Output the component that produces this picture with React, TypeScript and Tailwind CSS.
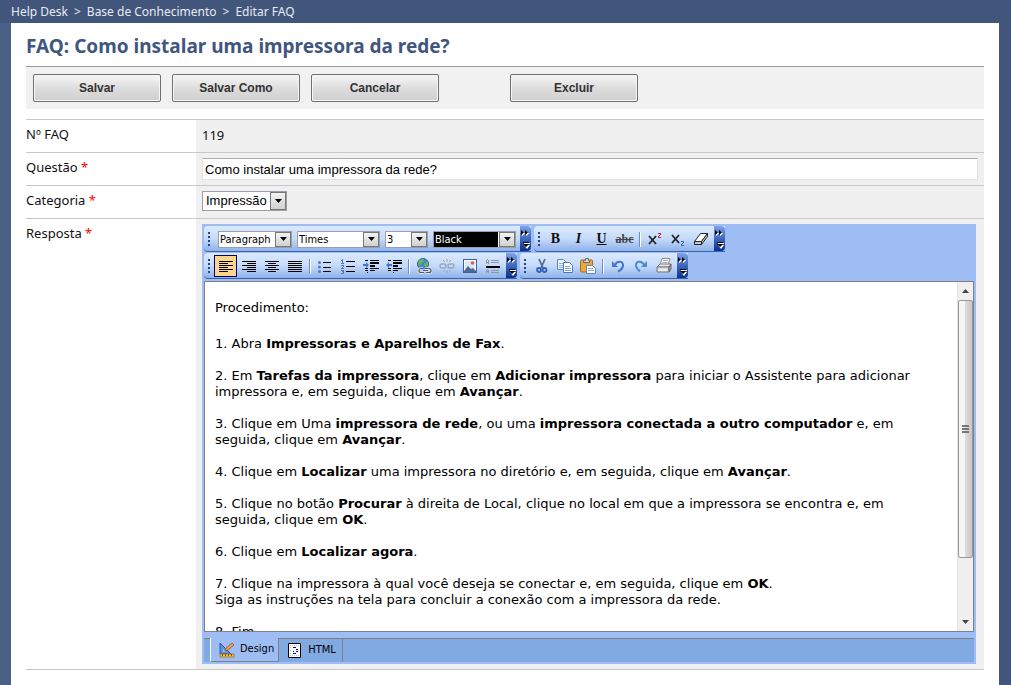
import type { ReactNode } from "react";

const steps: { key: string; body: ReactNode }[] = [
  { key: "abra", body: <>1. Abra <b>Impressoras e Aparelhos de Fax</b>.</> },
  {
    key: "tarefas",
    body: (
      <>
        2. Em <b>Tarefas da impressora</b>, clique em <b>Adicionar impressora</b> para iniciar o
        Assistente para adicionar impressora e, em seguida, clique em <b>Avançar</b>.
      </>
    ),
  },
  {
    key: "rede",
    body: (
      <>
        3. Clique em Uma <b>impressora de rede</b>, ou uma{" "}
        <b>impressora conectada a outro computador</b> e, em seguida, clique em <b>Avançar</b>.
      </>
    ),
  },
  {
    key: "localizar",
    body: (
      <>
        4. Clique em <b>Localizar</b> uma impressora no diretório e, em seguida, clique em{" "}
        <b>Avançar</b>.
      </>
    ),
  },
  {
    key: "procurar",
    body: (
      <>
        5. Clique no botão <b>Procurar</b> à direita de Local, clique no local em que a impressora
        se encontra e, em seguida, clique em <b>OK</b>.
      </>
    ),
  },
  { key: "agora", body: <>6. Clique em <b>Localizar agora</b>.</> },
  {
    key: "conectar",
    body: (
      <>
        7. Clique na impressora à qual você deseja se conectar e, em seguida, clique em <b>OK</b>.
        <br />
        Siga as instruções na tela para concluir a conexão com a impressora da rede.
      </>
    ),
  },
  { key: "fim", body: <>8. Fim</> },
];

function Icon({ children }: { children: ReactNode }) {
  return (
    <svg width="16" height="16" viewBox="0 0 16 16" fill="none" aria-hidden="true">
      {children}
    </svg>
  );
}

function Stroke({ d, color = "#000" }: { d: string; color?: string }) {
  return <path d={d} stroke={color} shapeRendering="crispEdges" />;
}

const alignLeft = <Icon><Stroke d="M1 3.5h14M1 5.5h9M1 7.5h14M1 9.5h9M1 11.5h14M1 13.5h9" /></Icon>;
const alignRight = <Icon><Stroke d="M1 3.5h14M6 5.5h9M1 7.5h14M6 9.5h9M1 11.5h14M6 13.5h9" /></Icon>;
const alignCenter = <Icon><Stroke d="M1 3.5h14M4 5.5h8M1 7.5h14M4 9.5h8M1 11.5h14M4 13.5h8" /></Icon>;
const alignJustify = <Icon><Stroke d="M1 3.5h14M1 5.5h14M1 7.5h14M1 9.5h14M1 11.5h14M1 13.5h14" /></Icon>;

const bulletList = (
  <Icon>
    <Stroke d="M6 4.5h8M6 9.5h8M6 13.5h8" />
    <g fill="#4f7cc0">
      <circle cx="2.5" cy="4.5" r="1.5" />
      <circle cx="2.5" cy="9" r="1.5" />
      <circle cx="2.5" cy="13.5" r="1.5" />
    </g>
  </Icon>
);

const numberList = (
  <Icon>
    <Stroke d="M6 3.5h9M6 8.5h9M6 13.5h9" />
    <Stroke
      color="#4f7cc0"
      d="M2.5 1v4M1 2.5h1M1 5.5h3M1 7.5h3M3 8.5h1M2 9.5h1M1 10.5h3M1 12.5h3M2 13.5h2M3 14.5h1M1 15.5h3"
    />
  </Icon>
);

const indent = (
  <Icon>
    <Stroke d="M2 2.5h3M7 2.5h9M7 4.5h9M7 5.5h9M7 7.5h5M7 8.5h5M2 10.5h3M7 10.5h9M2 12.5h3M7 12.5h5M4 14.5h1" />
    <path d="M0 6h3V4l3 3-3 3V8H0z" fill="#3f78c8" />
  </Icon>
);

const outdent = (
  <Icon>
    <Stroke d="M2 2.5h3M7 2.5h9M7 4.5h9M7 5.5h9M7 7.5h5M7 8.5h5M2 10.5h3M7 10.5h9M2 12.5h3M7 12.5h5M7 14.5h1" />
    <path d="M6 6H3V4L0 7l3 3V8h3z" fill="#3f78c8" />
  </Icon>
);

const link = (
  <Icon>
    <circle cx="7" cy="6" r="5.5" fill="#4486d4" stroke="#2d62a8" />
    <path d="M3 3c2-2 4-2 5-1l-1 2-2 1-1 3-2-2zM9 5l3-1v3l-2 2-2-2z" fill="#6cbf3c" />
    <path
      d="M7 10.500H5a2 2 0 0 0 0 4h3M9 10.500h4a2 2 0 0 1 0 4h-3M7 12.500h5"
      stroke="#dfe7f2"
      strokeWidth="2.600"
    />
    <path
      d="M7 10.500H5a2 2 0 0 0 0 4h3M9 10.500h4a2 2 0 0 1 0 4h-3M7 12.500h5"
      stroke="#505a66"
      strokeWidth="1.200"
    />
  </Icon>
);

const unlink = (
  <Icon>
    <g stroke="#98a8bd" strokeWidth="1.400">
      <rect x="1" y="6" width="6" height="4" rx="2" />
      <rect x="9" y="6" width="6" height="4" rx="2" />
      <path d="M8 1v3M4 2l2 2M12 2l-2 2M8 12v3M4 14l2-2M12 14l-2-2" strokeWidth="1" />
    </g>
  </Icon>
);

const picture = (
  <Icon>
    <rect x="1.500" y="1.500" width="13" height="13" fill="#fff" stroke="#3f5f9a" />
    <path d="M3 3h10v8H3z" fill="#d7e8fb" />
    <path d="M2 13l4-5 3 3 2-1 3 3v1H2z" fill="#4c6994" />
    <circle cx="10.500" cy="5" r="1.800" fill="#e8632c" />
  </Icon>
);

const rule = (
  <Icon>
    <Stroke color="#8a97aa" d="M6 2.500h8M6 4.500h8M6 12.500h8M6 14.500h8M1.500 2v4M3.500 2v4M2 1.500h1M2 4.500h1M1.500 12v3M3.500 12v3M2 11.500h1M2 13.500h1" />
    <path d="M1 8h14v2H1z" fill="#000" />
  </Icon>
);

const cut = (
  <Icon>
    <path d="M5 1l4 9M11 1L7 10" stroke="#5b6f8c" strokeWidth="1.800" />
    <circle cx="5" cy="12" r="2" stroke="#2f62b8" strokeWidth="1.800" />
    <circle cx="10.500" cy="12" r="2" stroke="#2f62b8" strokeWidth="1.800" />
  </Icon>
);

const copy = (
  <Icon>
    <path d="M.5 1.500h6l2 2v8h-8z" fill="#eef5ff" stroke="#5c86c8" />
    <path d="M2 5.500h4M2 7.500h4M2 9.500h4" stroke="#8fb0e2" />
    <path d="M6.500 4.500h6l3 3v7h-9z" fill="#fff" stroke="#4a78c0" />
    <path d="M8 8.500h5M8 10.500h6M8 12.500h6" stroke="#7ba2de" />
  </Icon>
);

const paste = (
  <Icon>
    <rect x=".5" y="2" width="12" height="12" rx="1" fill="#eba93a" stroke="#a86c1c" />
    <path d="M3.500 4.500h6v-2H8.500V.5h-3v2h-2z" fill="#d9d9d9" stroke="#6b6b6b" />
    <path d="M6.500 7.500h6l3 3v5h-9z" fill="#fff" stroke="#6583b5" />
    <path d="M8 10.500h5M8 12.500h6" stroke="#8fa9d3" />
  </Icon>
);

const undo = (
  <Icon>
    <path d="M5 7c2-5 9-4 8 1-.4 2.600-2 4-5 5.500" stroke="#4678d0" strokeWidth="2" />
    <path d="M2 3v6h6z" fill="#4678d0" />
  </Icon>
);

const redo = (
  <Icon>
    <path d="M11 7C9 2 2 3 3 8c.4 2.600 2 4 4 5.500" stroke="#4c8bd0" strokeWidth="2" />
    <path d="M14 3v6H8z" fill="#4c8bd0" />
  </Icon>
);

const print = (
  <Icon>
    <path d="M6 .5h8l-2 7H4z" fill="#fff" stroke="#8c8c94" />
    <path d="M7 2.500h5M6.500 4.500h5" stroke="#a8a8b0" />
    <path d="M1 9l3-3h11l-2 3z" fill="#ececef" stroke="#77777d" />
    <path d="M1 9h12v5H1z" fill="#dcdce0" stroke="#77777d" />
    <path d="M13 9l2-3v5l-2 3z" fill="#a5a5ac" stroke="#66666c" />
    <path d="M3 12h8" stroke="#fff" />
  </Icon>
);

const eraser = (
  <Icon>
    <path d="M1.500 10.500l6-8h7l-6 8z" fill="#fff" stroke="#222" />
    <path d="M1.500 10.500h7v3h-7zM8.500 10.500l6-8v3l-6 8z" fill="#c8c8c8" stroke="#222" />
  </Icon>
);

const letter = "font-['Liberation_Serif',serif] text-sm leading-4";
const bold = <span className={`${letter} font-black`}>B</span>;
const italic = <span className={`${letter} font-bold italic`}>I</span>;
const underline = <span className={`${letter} font-bold underline`}>U</span>;
const strike = (
  <span className="font-['Liberation_Serif',serif] text-xs leading-4 font-bold text-[#444] line-through">
    abc
  </span>
);
const superscript = (
  <Icon>
    <path d="M2 5l7 8M9 5l-7 8" stroke="#222" strokeWidth="1.800" />
    <Stroke color="#c8202c" d="M11 2.500h3M13 3.500h1M12 4.500h1M11 5.500h1M11 6.500h3" />
  </Icon>
);
const subscript = (
  <Icon>
    <path d="M2 4l7 8M9 4l-7 8" stroke="#222" strokeWidth="1.800" />
    <Stroke color="#2a68c8" d="M11 10.500h3M13 11.500h1M12 12.500h1M11 13.500h1M11 14.500h3" />
  </Icon>
);

interface Tool {
  label: string;
  icon: ReactNode;
  active?: boolean;
}

function ToolButton({ label, icon, active }: Tool) {
  return (
    <button
      type="button"
      title={label}
      aria-label={label}
      aria-pressed={active}
      className={
        active
          ? "flex h-[22px] w-[23px] items-center justify-center border border-[#000080] bg-[#ffd58c]"
          : "flex h-[22px] w-[23px] items-center justify-center"
      }
    >
      {icon}
    </button>
  );
}

function ToolGroup({ tools }: { tools: Tool[] }) {
  return (
    <div className="flex items-center">
      {tools.map((tool) => (
        <ToolButton key={tool.label} {...tool} />
      ))}
    </div>
  );
}

function Separator() {
  return (
    <div className="flex w-[7px] justify-center">
      <div className="h-[15px] w-px bg-[#6a8ccb]" />
      <div className="h-[15px] w-px bg-white" />
    </div>
  );
}

function Toolbar({ children }: { children: ReactNode }) {
  return (
    <div className="flex h-[26px] rounded-l-sm border-b border-[#3b61a6] bg-linear-to-b from-[#dbe9fd] via-[#c6dbfa] to-[#8fb2ea]">
      <div className="flex items-center pt-px pr-[2px] pl-1">
        <div className="flex w-[6px] flex-col gap-[2px]">
          <i className="size-[2px] bg-[#27418a]" />
          <i className="size-[2px] bg-[#27418a]" />
          <i className="size-[2px] bg-[#27418a]" />
          <i className="size-[2px] bg-[#27418a]" />
        </div>
        {children}
      </div>
      <button
        type="button"
        aria-label="Mais botões"
        className="w-[11px] rounded-r-sm bg-linear-to-b from-[#7fa4ea] via-[#3f68bd] to-[#08308f]"
      >
        <svg width="11" height="25" viewBox="0 0 11 25" aria-hidden="true">
          <path d="M2 5l3 2.500L2 10zM6 5l3 2.500L6 10z" fill="#fff" />
          <path d="M1 4l3 2.500L1 9zM5 4l3 2.500L5 9z" fill="#000" />
          <path d="M4 17h6v1H4zM4 19h6l-3 4z" fill="#fff" />
          <path d="M3 16h6v1H3zM3 18h6l-3 3z" fill="#000" />
        </svg>
      </button>
    </div>
  );
}

interface ComboProps {
  label: string;
  value: string;
  width: string;
  text?: string;
}

function Combo({ label, value, width, text = "bg-white text-black" }: ComboProps) {
  return (
    <div className={`relative h-[17px] border border-[#9aa0aa] bg-white ${width}`}>
      <select
        aria-label={label}
        className={`block h-[15px] w-[calc(100%-17px)] appearance-none pl-px font-['DejaVu_Sans_Condensed','DejaVu_Sans',sans-serif] text-[11px] leading-[15px] ${text}`}
      >
        <option>{value}</option>
      </select>
      <DropArrow />
    </div>
  );
}

function DropArrow() {
  return (
    <span className="pointer-events-none absolute inset-y-0 right-0 flex w-4 items-center justify-center border border-[#777] bg-linear-to-b from-[#f4f4f4] to-[#d0d0d0]">
      <svg width="7" height="4" viewBox="0 0 7 4" aria-hidden="true">
        <path d="M0 0h7L3.500 4z" fill="#000" />
      </svg>
    </span>
  );
}

function ScrollBar() {
  return (
    <div className="flex w-4 flex-col border-l border-[#e3e3e3] bg-[#efefef]" aria-hidden="true">
      <div className="flex h-[18px] items-center justify-center">
        <svg width="7" height="4" viewBox="0 0 7 4">
          <path d="M0 4h7L3.500 0z" fill="#444" />
        </svg>
      </div>
      <div className="flex h-[258px] flex-col items-center justify-center gap-px rounded-xs border border-[#979797] bg-linear-to-r from-[#f6f6f6] from-45% via-[#dcdcdf] via-50% to-[#c6c6ca]">
        <i className="h-[2px] w-[7px] bg-[#777]" />
        <i className="h-[2px] w-[7px] bg-[#777]" />
        <i className="h-[2px] w-[7px] bg-[#777]" />
      </div>
      <div className="flex flex-1 items-end justify-center pb-[7px]">
        <svg width="7" height="4" viewBox="0 0 7 4">
          <path d="M0 0h7L3.500 4z" fill="#444" />
        </svg>
      </div>
    </div>
  );
}

function Editor() {
  return (
    <div className="mr-[2px] bg-[#9fbdf5] p-[2px]">
      <div className="flex flex-col gap-px pb-[2px]">
        <div className="flex gap-[3px]">
          <Toolbar>
            <div className="flex items-center gap-[5px] pr-[2px] pl-1">
              <Combo label="Formato" value="Paragraph" width="w-[74px]" />
              <Combo label="Fonte" value="Times" width="w-[83px]" />
              <Combo label="Tamanho" value="3" width="w-[43px]" />
              <Combo label="Cor" value="Black" width="w-[83px]" text="bg-black text-white" />
            </div>
          </Toolbar>
          <Toolbar>
            <ToolGroup
              tools={[
                { label: "Negrito", icon: bold },
                { label: "Itálico", icon: italic },
                { label: "Sublinhado", icon: underline },
                { label: "Tachado", icon: strike },
              ]}
            />
            <Separator />
            <ToolGroup
              tools={[
                { label: "Sobrescrito", icon: superscript },
                { label: "Subscrito", icon: subscript },
                { label: "Remover formatação", icon: eraser },
              ]}
            />
          </Toolbar>
        </div>
        <div className="flex gap-[3px]">
          <Toolbar>
            <ToolGroup
              tools={[
                { label: "Alinhar à esquerda", icon: alignLeft, active: true },
                { label: "Alinhar à direita", icon: alignRight },
                { label: "Centralizar", icon: alignCenter },
                { label: "Justificar", icon: alignJustify },
              ]}
            />
            <Separator />
            <ToolGroup
              tools={[
                { label: "Marcadores", icon: bulletList },
                { label: "Numeração", icon: numberList },
                { label: "Aumentar recuo", icon: indent },
                { label: "Diminuir recuo", icon: outdent },
              ]}
            />
            <Separator />
            <ToolGroup
              tools={[
                { label: "Inserir link", icon: link },
                { label: "Remover link", icon: unlink },
                { label: "Imagem", icon: picture },
                { label: "Linha horizontal", icon: rule },
              ]}
            />
          </Toolbar>
          <Toolbar>
            <ToolGroup
              tools={[
                { label: "Recortar", icon: cut },
                { label: "Copiar", icon: copy },
                { label: "Colar", icon: paste },
              ]}
            />
            <Separator />
            <ToolGroup
              tools={[
                { label: "Desfazer", icon: undo },
                { label: "Refazer", icon: redo },
                { label: "Imprimir", icon: print },
              ]}
            />
          </Toolbar>
        </div>
      </div>

      <div className="flex h-[351px] border border-[#808080] bg-white">
        <div
          role="textbox"
          aria-multiline="true"
          aria-labelledby="resposta"
          className="flex flex-1 flex-col gap-4 overflow-hidden pt-[18px] pr-6 pl-[10px] font-['DejaVu_Sans',sans-serif] text-[13px] leading-4 text-black"
        >
          <p className="pb-1">Procedimento:</p>
          {steps.map((step) => (
            <p key={step.key}>{step.body}</p>
          ))}
        </div>
        <ScrollBar />
      </div>

      <div className="mt-[6px] flex h-6 border-t border-[#808080] bg-[#81a9e2] pl-[6px] font-['DejaVu_Sans_Condensed','DejaVu_Sans',sans-serif] text-[11px] text-black">
        <button
          type="button"
          className="-mt-px flex items-center gap-[5px] border-r border-b border-l border-[#808080] border-l-white bg-[#9fbdf5] pr-1 pl-2"
        >
          <Icon>
            <path d="M1 1v11h11z" fill="#5d92dc" stroke="#2a57a8" />
            <path d="M4 7v3h3z" fill="#9fbdf5" />
            <path d="M6 9l1-3 6-5 2 2-6 5z" fill="#e8a24c" stroke="#8a4a20" strokeWidth=".7" />
            <path d="M1 12h14v3H1z" fill="#f3c03c" stroke="#9a6b10" strokeWidth=".7" />
            <path d="M3.500 12v2M6.500 12v2M9.500 12v2M12.500 12v2" stroke="#7a5208" />
          </Icon>
          Design
        </button>
        <button type="button" className="flex items-center gap-[5px] border-r border-[#808080] pr-[6px] pl-2">
          <Icon>
            <path d="M1.500 .5h12v14h-12z" fill="#fff" stroke="#000" />
            <path d="M3 2.500h9M3 4.500h2M3 7.500h2M3 10.500h2M3 12.500h9" stroke="#bbb" strokeDasharray="1 1" />
            <Stroke color="#0000b0" d="M6 4.500h3M9 6.500h2M9 8.500h2M6 10.500h3M6 8.500h1" />
          </Icon>
          HTML
        </button>
      </div>
    </div>
  );
}

function Required() {
  return <span className="text-[#f00]">*</span>;
}

function Row({ label, children }: { label: ReactNode; children: ReactNode }) {
  return (
    <div className="flex border-t border-[#c8c8c8]">
      <div className="w-[170px] shrink-0 pt-[5px] leading-[18px]">{label}</div>
      <div className="min-h-8 flex-1 bg-[#f0f0f0] px-[6px]">{children}</div>
    </div>
  );
}

function ActionButton({ children }: { children: ReactNode }) {
  return (
    <button
      type="button"
      className="h-7 w-32 rounded-xs border border-[#707070] bg-linear-to-b from-[#f2f2f2] from-10% via-[#dddddd] via-50% to-[#cfcfcf] font-['Liberation_Sans',Arial,sans-serif] text-xs font-bold text-[#333] shadow-[inset_0_0_0_1px_#f6f6f6]"
    >
      {children}
    </button>
  );
}

export default function App() {
  return (
    <div className="min-h-screen bg-[#42557b] font-['Noto_Sans','Open_Sans',sans-serif] text-[13px] text-[#111]">
      <nav
        aria-label="Trilha"
        className="flex h-[23px] items-center gap-[6px] px-[11px] text-xs text-[#e6ecf5]"
      >
        <a href="#help-desk">Help Desk</a>
        <span>&gt;</span>
        <a href="#base">Base de Conhecimento</a>
        <span>&gt;</span>
        <a href="#faq">Editar FAQ</a>
      </nav>

      <main className="mr-3 min-h-[calc(100vh-23px)] border-l-[11px] border-[#4a6087] bg-white pr-[15px] pb-[15px] pl-[15px]">
        <h1 className="pt-[14px] pb-[10px] text-[19px] leading-[19px] font-bold text-[#3f567f]">
          FAQ: Como instalar uma impressora da rede?
        </h1>

        <div className="flex gap-[11px] border-t border-[#999] bg-[#f1f1f1] px-[7px] py-[7px]">
          <ActionButton>Salvar</ActionButton>
          <ActionButton>Salvar Como</ActionButton>
          <ActionButton>Cancelar</ActionButton>
          <div className="ml-[60px]">
            <ActionButton>Excluir</ActionButton>
          </div>
        </div>

        <form className="mt-[10px] border-b border-[#c8c8c8]">
          <Row label="Nº FAQ">
            <output className="block pt-[6px] leading-[18px]">119</output>
          </Row>
          <Row label={<label htmlFor="questao">Questão <Required /></label>}>
            <div className="py-[5px]">
              <input
                id="questao"
                defaultValue="Como instalar uma impressora da rede?"
                className="block h-[22px] w-full border border-[#e2e3ea] border-t-[#abadb3] bg-white px-[2px] font-['Liberation_Sans',Arial,sans-serif] text-[13px] text-black"
              />
            </div>
          </Row>
          <Row label={<label htmlFor="categoria">Categoria <Required /></label>}>
            <div className="py-[5px]">
              <div className="relative h-5 w-[85px] border border-[#9aa0aa] bg-white">
                <select
                  id="categoria"
                  className="block h-[18px] w-full appearance-none pl-[3px] font-['Liberation_Sans',Arial,sans-serif] text-[13px] leading-[18px] text-black"
                >
                  <option>Impressão</option>
                </select>
                <DropArrow />
              </div>
            </div>
          </Row>
          <Row label={<span id="resposta">Resposta <Required /></span>}>
            <div className="py-[5px]">
              <Editor />
            </div>
          </Row>
        </form>
      </main>
    </div>
  );
}
